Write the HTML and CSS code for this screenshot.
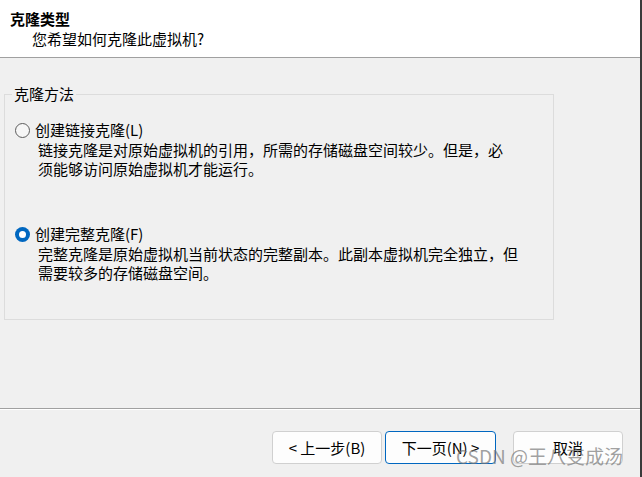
FILE: index.html
```html
<!DOCTYPE html>
<html>
<head>
    <meta http-equiv="Content-Type" content="text/html; charset=utf-8" />
    <title>克隆虚拟机向导</title>
    <link rel="stylesheet" href="styles.css">
</head>
<body>
<div class="wizard">
    <div class="head">
        <div class="head-title">克隆类型</div>
        <div class="head-sub">您希望如何克隆此虚拟机?</div>
    </div>

    <div class="main">
        <fieldset class="group">
            <legend>克隆方法</legend>
            <div class="opt">
                <div class="opt-row"><span class="radio"></span><span>创建链接克隆(L)</span></div>
                <div class="opt-desc">链接克隆是对原始虚拟机的引用，所需的存储磁盘空间较少。但是，必<br>须能够访问原始虚拟机才能运行。</div>
            </div>
            <div class="opt opt2">
                <div class="opt-row"><span class="radio on"></span><span>创建完整克隆(F)</span></div>
                <div class="opt-desc">完整克隆是原始虚拟机当前状态的完整副本。此副本虚拟机完全独立，但<br>需要较多的存储磁盘空间。</div>
            </div>
        </fieldset>
    </div>

    <div class="foot">
        <a class="btn" href="javascript:;">&lt; 上一步(B)</a>
        <a class="btn btn-main" href="javascript:;">下一页(N) &gt;</a>
        <a class="btn btn-cancel" href="javascript:;">取消</a>
    </div>

    <!-- 图片水印 -->
    <div class="mark">CSDN @王八变成汤</div>
</div>
</body>
</html>
```

FILE: styles.css
```css
*{ margin: 0; padding: 0; box-sizing: border-box;}
body{ background: #f0f0f0; font-family: "Noto Sans CJK SC", "Noto Sans", sans-serif; font-size: 15px; color: #000; overflow: hidden;}
.wizard{ position: relative; width: 642px; height: 477px; display: flex; flex-direction: column; border-right: 2px solid #3a3a3a;}

.head{ height: 58px; background: #fff; border-bottom: 1px solid #a0a0a0; padding: 9px 0 0 10px;}
.head-title{ font-weight: bold; line-height: 20px;}
.head-sub{ line-height: 20px; margin-left: 22px;}

.main{ flex: 1; padding: 26px 0 0 4px;}
.group{ width: 550px; height: 236px; border: 1px solid #dcdcdc; padding: 0 0 0 8px;}
.group legend{ padding: 0 2px; line-height: 20px; margin-left: -1px;}

.opt{ margin-top: 16px;}
.opt2{ margin-top: 46px;}
.opt-row{ display: flex; align-items: center; line-height: 20px; margin-left: 2px;}
.radio{ width: 15px; height: 15px; border-radius: 50%; border: 1px solid #5c5c5c; background: #f6f6f6; margin-right: 5px;}
.radio.on{ border: none; background: #0067c0; position: relative;}
.radio.on:after{ content: ""; position: absolute; left: 4px; top: 4px; width: 7px; height: 7px; border-radius: 50%; background: #fff;}
.opt-desc{ padding-left: 25px; line-height: 19px;}

.foot{ height: 69px; border-top: 1px solid #a0a0a0; box-shadow: inset 0 1px 0 #fff; display: flex; padding: 22px 0 0 272px;}
.btn{ display: block; width: 110px; height: 33px; line-height: 31px; text-align: center; color: #000; text-decoration: none; background: #fdfdfd; border: 1px solid #d0d0d0; border-radius: 4px;}
.btn-main{ width: 111px; margin-left: 3px; border-color: #0067c0;}
.btn-cancel{ margin-left: 17px;}

.mark{ position: absolute; left: 456px; top: 444px; font-size: 19px; line-height: 24px; color: rgba(120, 120, 120, 0.7); white-space: nowrap;}
```
